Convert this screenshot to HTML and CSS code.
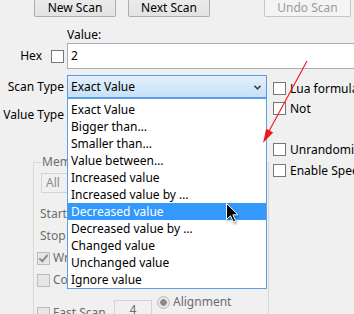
FILE: index.html
```html
<!DOCTYPE html>
<html lang="en">
<head>
    <meta charset="UTF-8">
    <title>Scan</title>
    <link rel="stylesheet" href="styles.css">
</head>
<body>
    <div class="toolbar">
        <button class="btn btn-new">New Scan</button>
        <button class="btn btn-next">Next Scan</button>
        <button class="btn btn-undo" disabled>Undo Scan</button>
    </div>

    <div class="value-caption">Value:</div>
    <div class="hex-row">
        <span class="hex-label">Hex</span>
        <span class="check"></span>
        <div class="textbox">2</div>
    </div>

    <div class="main">
        <div class="left">
            <div class="field-row">
                <span class="field-label">Scan Type</span>
                <div class="combo combo-open">
                    <span>Exact Value</span>
                    <svg class="chevron" width="7" height="5" viewBox="0 0 7 5"><path d="M0.5 0.8 L3.5 3.8 L6.5 0.8" fill="none" stroke="#444" stroke-width="1.6"/></svg>
                </div>
            </div>
            <div class="field-row value-type-row">
                <span class="field-label">Value Type</span>
                <div class="combo">
                    <span>4 Bytes</span>
                </div>
            </div>

            <fieldset class="group">
                <legend>Memory Scan Options</legend>
                <div class="all-combo">All</div>
                <div class="range-row range-start">Start</div>
                <div class="range-row">Stop</div>
                <div class="opt-row"><span class="check check-off checked"></span><span>Writable</span></div>
                <div class="opt-row"><span class="check check-off"></span><span>CopyOnWrite</span></div>
                <div class="bottom-row">
                    <div class="fast-scan"><span class="check check-off"></span><span>Fast Scan</span></div>
                    <div class="fast-value">4</div>
                    <div class="align-opt"><span class="radio"></span><span>Alignment</span></div>
                </div>
            </fieldset>
        </div>

        <div class="right">
            <div class="chk-row row-lua"><span class="check"></span><span>Lua formula</span></div>
            <div class="chk-row row-not"><span class="check"></span><span>Not</span></div>
            <div class="chk-row row-unrand"><span class="check"></span><span>Unrandomizer</span></div>
            <div class="chk-row row-speed"><span class="check"></span><span>Enable Speedhack</span></div>
        </div>
    </div>

    <!-- open list of the Scan Type combo -->
    <ul class="dropdown">
        <li>Exact Value</li>
        <li>Bigger than…</li>
        <li>Smaller than…</li>
        <li>Value between…</li>
        <li>Increased value</li>
        <li>Increased value by …</li>
        <li class="selected">Decreased value</li>
        <li>Decreased value by …</li>
        <li>Changed value</li>
        <li>Unchanged value</li>
        <li>Ignore value</li>
    </ul>

    <svg class="annotation" width="354" height="314" viewBox="0 0 354 314">
        <line x1="307" y1="61" x2="268" y2="133" stroke="#f01818" stroke-width="1.1"/>
        <polygon points="263,143 273.2,132.6 266.2,128.8" fill="#f01818"/>
    </svg>

    <svg class="cursor" width="14" height="21" viewBox="0 0 14 21">
        <path d="M0.5 0.5 L0.5 16.5 L4.5 12.8 L7.3 18.8 L9.6 17.8 L6.9 11.8 L12 11.8 Z" fill="#000" stroke="#fff" stroke-width="1"/>
    </svg>
</body>
</html>
```

FILE: styles.css
```css
body {
    font-family: "Noto Sans", "Noto Sans CJK SC", sans-serif;
    font-size: 12px;
    line-height: 16px;
    color: #000;
    margin: 0;
    width: 354px;
    height: 314px;
    overflow: hidden;
    position: relative;
    background-color: #f0f0f0;
}
.toolbar {
    display: flex;
    padding-left: 34px;
    height: 17px;
}
.btn {
    font-family: inherit;
    font-size: 12px;
    line-height: 16px;
    height: 17px;
    padding: 0 0 4px 0;
    border: 1px solid #adadad;
    border-top: none;
    border-radius: 0 0 2px 2px;
    background: linear-gradient(#ebebeb, #e3e3e3);
    color: #000;
}
.btn-new, .btn-next {
    width: 82px;
    margin-right: 12px;
}
.btn-undo {
    width: 87px;
    margin-left: 42px;
    border-color: #c6c6c6;
    background: #f4f4f4;
    color: #9a9a9a;
}
.value-caption {
    height: 26px;
    box-sizing: border-box;
    padding: 10px 0 0 67px;
}
.hex-row {
    display: flex;
    align-items: center;
    height: 26px;
}
.hex-label {
    width: 42px;
    text-align: right;
}
.check {
    display: inline-block;
    width: 13px;
    height: 13px;
    box-sizing: border-box;
    border: 1px solid #767676;
    background-color: #fff;
    flex: none;
}
.hex-row .check {
    margin-left: 9px;
}
.textbox {
    flex: 1;
    height: 26px;
    box-sizing: border-box;
    margin-left: 3px;
    padding: 4px 3px;
    background-color: #fff;
    border: 1px solid #abadb3;
    border-right: none;
}
.main {
    display: flex;
    margin-top: 6px;
}
.left {
    width: 269px;
    flex: none;
}
.field-row {
    display: flex;
    align-items: center;
    height: 23px;
}
.value-type-row {
    margin-top: 5px;
}
.field-label {
    width: 64px;
    text-align: right;
    white-space: nowrap;
}
.combo {
    display: flex;
    align-items: center;
    justify-content: space-between;
    width: 200px;
    height: 23px;
    box-sizing: border-box;
    margin-left: 3px;
    padding: 0 5px 0 3px;
    border: 1px solid #acacac;
    background: linear-gradient(#f0f0f0, #e5e5e5);
}
.combo-open {
    border-color: #569de5;
    background: linear-gradient(#e4f1fc, #c6e0f8);
}
.chevron {
    margin-top: 1px;
}
.group {
    margin: 28px 0 0 33px;
    padding: 0 0 0 3px;
    border: 1px solid #d9d9d9;
    color: #6d6d6d;
    min-width: 0;
}
.group legend {
    padding: 0 1px;
    margin-left: 4px;
}
.all-combo {
    width: 130px;
    height: 20px;
    box-sizing: border-box;
    margin: 3px 0 0 4px;
    padding: 1px 4px;
    border: 1px solid #d4d4d4;
    background-color: #f0f0f0;
    color: #8a8a8a;
}
.range-row {
    height: 22px;
    line-height: 22px;
    margin-left: 3px;
}
.range-start {
    margin-top: 10px;
}
.opt-row {
    display: flex;
    align-items: center;
    gap: 3px;
    height: 22px;
    white-space: nowrap;
}
.check-off {
    border-color: #bcbcbc;
    background-color: #e6e6e6;
}
.checked {
    position: relative;
}
.checked::after {
    content: "";
    position: absolute;
    left: 3px;
    top: 0px;
    width: 3px;
    height: 7px;
    border: solid #8a8a8a;
    border-width: 0 2px 2px 0;
    transform: rotate(40deg);
}
.bottom-row {
    display: flex;
    align-items: flex-start;
    height: 30px;
}
.fast-scan {
    display: flex;
    align-items: center;
    gap: 3px;
    margin-top: 14px;
    width: 77px;
    white-space: nowrap;
}
.fast-value {
    width: 38px;
    height: 20px;
    box-sizing: border-box;
    margin-top: 9px;
    border: 1px solid #d4d4d4;
    background-color: #f0f0f0;
    text-align: center;
    line-height: 18px;
}
.align-opt {
    display: flex;
    align-items: center;
    gap: 3px;
    margin: 3px 0 0 5px;
}
.radio {
    width: 13px;
    height: 13px;
    box-sizing: border-box;
    border-radius: 50%;
    border: 1px solid #bcbcbc;
    background: radial-gradient(circle, #8a8a8a 0 3px, #e6e6e6 3.5px);
}
.right {
    padding-left: 4px;
}
.chk-row {
    display: flex;
    align-items: center;
    gap: 4px;
    height: 13px;
    white-space: nowrap;
}
.row-lua {
    margin-top: 7px;
}
.row-not {
    margin-top: 7px;
}
.row-unrand {
    margin-top: 28px;
}
.row-speed {
    margin-top: 8px;
}
.dropdown {
    position: absolute;
    left: 67px;
    top: 98px;
    width: 200px;
    box-sizing: border-box;
    margin: 0;
    padding: 2px 0 0 0;
    list-style: none;
    background-color: #fff;
    border: 1px solid #5b9fe4;
}
.dropdown li {
    height: 17px;
    line-height: 17px;
    padding-left: 3px;
    white-space: nowrap;
}
.dropdown li.selected {
    background-color: #3399ff;
    color: #fff;
}
.annotation {
    position: absolute;
    left: 0;
    top: 0;
}
.cursor {
    position: absolute;
    left: 226px;
    top: 203px;
    filter: drop-shadow(1px 2px 1px rgba(0, 0, 0, 0.35));
}
```
